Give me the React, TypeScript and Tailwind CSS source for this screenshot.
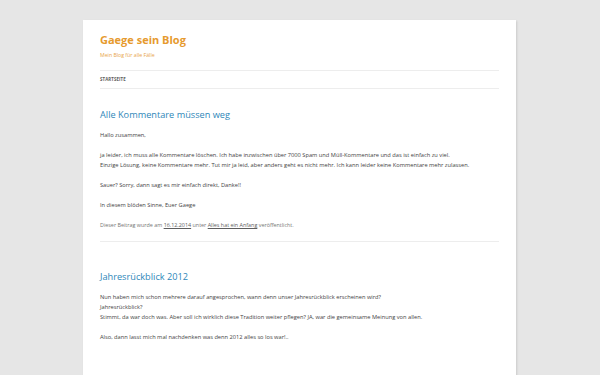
import React from "react";

const font = { fontFamily: '"Open Sans", "DejaVu Sans", sans-serif' };

function Post({ title, children }: { title: string; children: React.ReactNode }) {
  return (
    <article>
      <h2 className="text-[9.2px] leading-[14px] font-normal text-[#2e87b9] mb-[8px]">{title}</h2>
      <div className="text-[5.7px] leading-[10px] text-[#444]">{children}</div>
    </article>
  );
}

export default function App() {
  return (
    <div className="h-[375px] bg-[#e6e6e6] overflow-hidden" style={font}>
      <div className="ml-[83px] mt-[20px] w-[433px] h-[400px] bg-white px-[17px] shadow-[1px_1px_2px_rgba(0,0,0,0.12)]">
        {/* Header */}
        <header className="pt-[12px]">
          <h1 className="text-[11px] leading-[16px] font-bold text-[#e69a2e]">Gaege sein Blog</h1>
          <p className="mt-[3px] text-[5.2px] leading-[8px] text-[#e8a449]">Mein Blog für alle Fälle</p>
        </header>
        <nav className="mt-[11px] border-t border-b border-[#ededed] h-[19px] flex items-center">
          <span className="text-[4.4px] font-bold uppercase text-[#5e5e5e] tracking-[0.1px]">Startseite</span>
        </nav>

        {/* Post 1 */}
        <div className="mt-[19px] border-b border-[#ededed] pb-[11px]">
          <Post title="Alle Kommentare müssen weg">
            <p className="mb-[10px]">Hallo zusammen,</p>
            <p className="mb-[10px]">
              ja leider, ich muss alle Kommentare löschen. Ich habe inzwischen über 7000 Spam und Müll-Kommentare und das ist einfach zu viel.
              <br />
              Einzige Lösung, keine Kommentare mehr. Tut mir ja leid, aber anders geht es nicht mehr. Ich kann leider keine Kommentare mehr zulassen.
            </p>
            <p className="mb-[10px]">Sauer? Sorry, dann sagt es mir einfach direkt, Danke!!</p>
            <p className="mb-[10px]">In diesem blöden Sinne, Euer Gaege</p>
          </Post>
          <p className="text-[5.4px] leading-[10px] text-[#757575]">
            Dieser Beitrag wurde am <span className="underline text-[#5e5e5e]">16.12.2014</span> unter{" "}
            <span className="underline text-[#5e5e5e]">Alles hat ein Anfang</span> veröffentlicht.
          </p>
        </div>

        {/* Post 2 */}
        <div className="mt-[28px]">
          <Post title="Jahresrückblick 2012">
            <p className="mb-[10px]">
              Nun haben mich schon mehrere darauf angesprochen, wann denn unser Jahresrückblick erscheinen wird?
              <br />
              Jahresrückblick?
              <br />
              Stimmt, da war doch was. Aber soll ich wirklich diese Tradition weiter pflegen? JA, war die gemeinsame Meinung von allen.
            </p>
            <p className="mb-[10px]">Also, dann lasst mich mal nachdenken was denn 2012 alles so los war!..</p>
          </Post>
        </div>
      </div>
    </div>
  );
}
